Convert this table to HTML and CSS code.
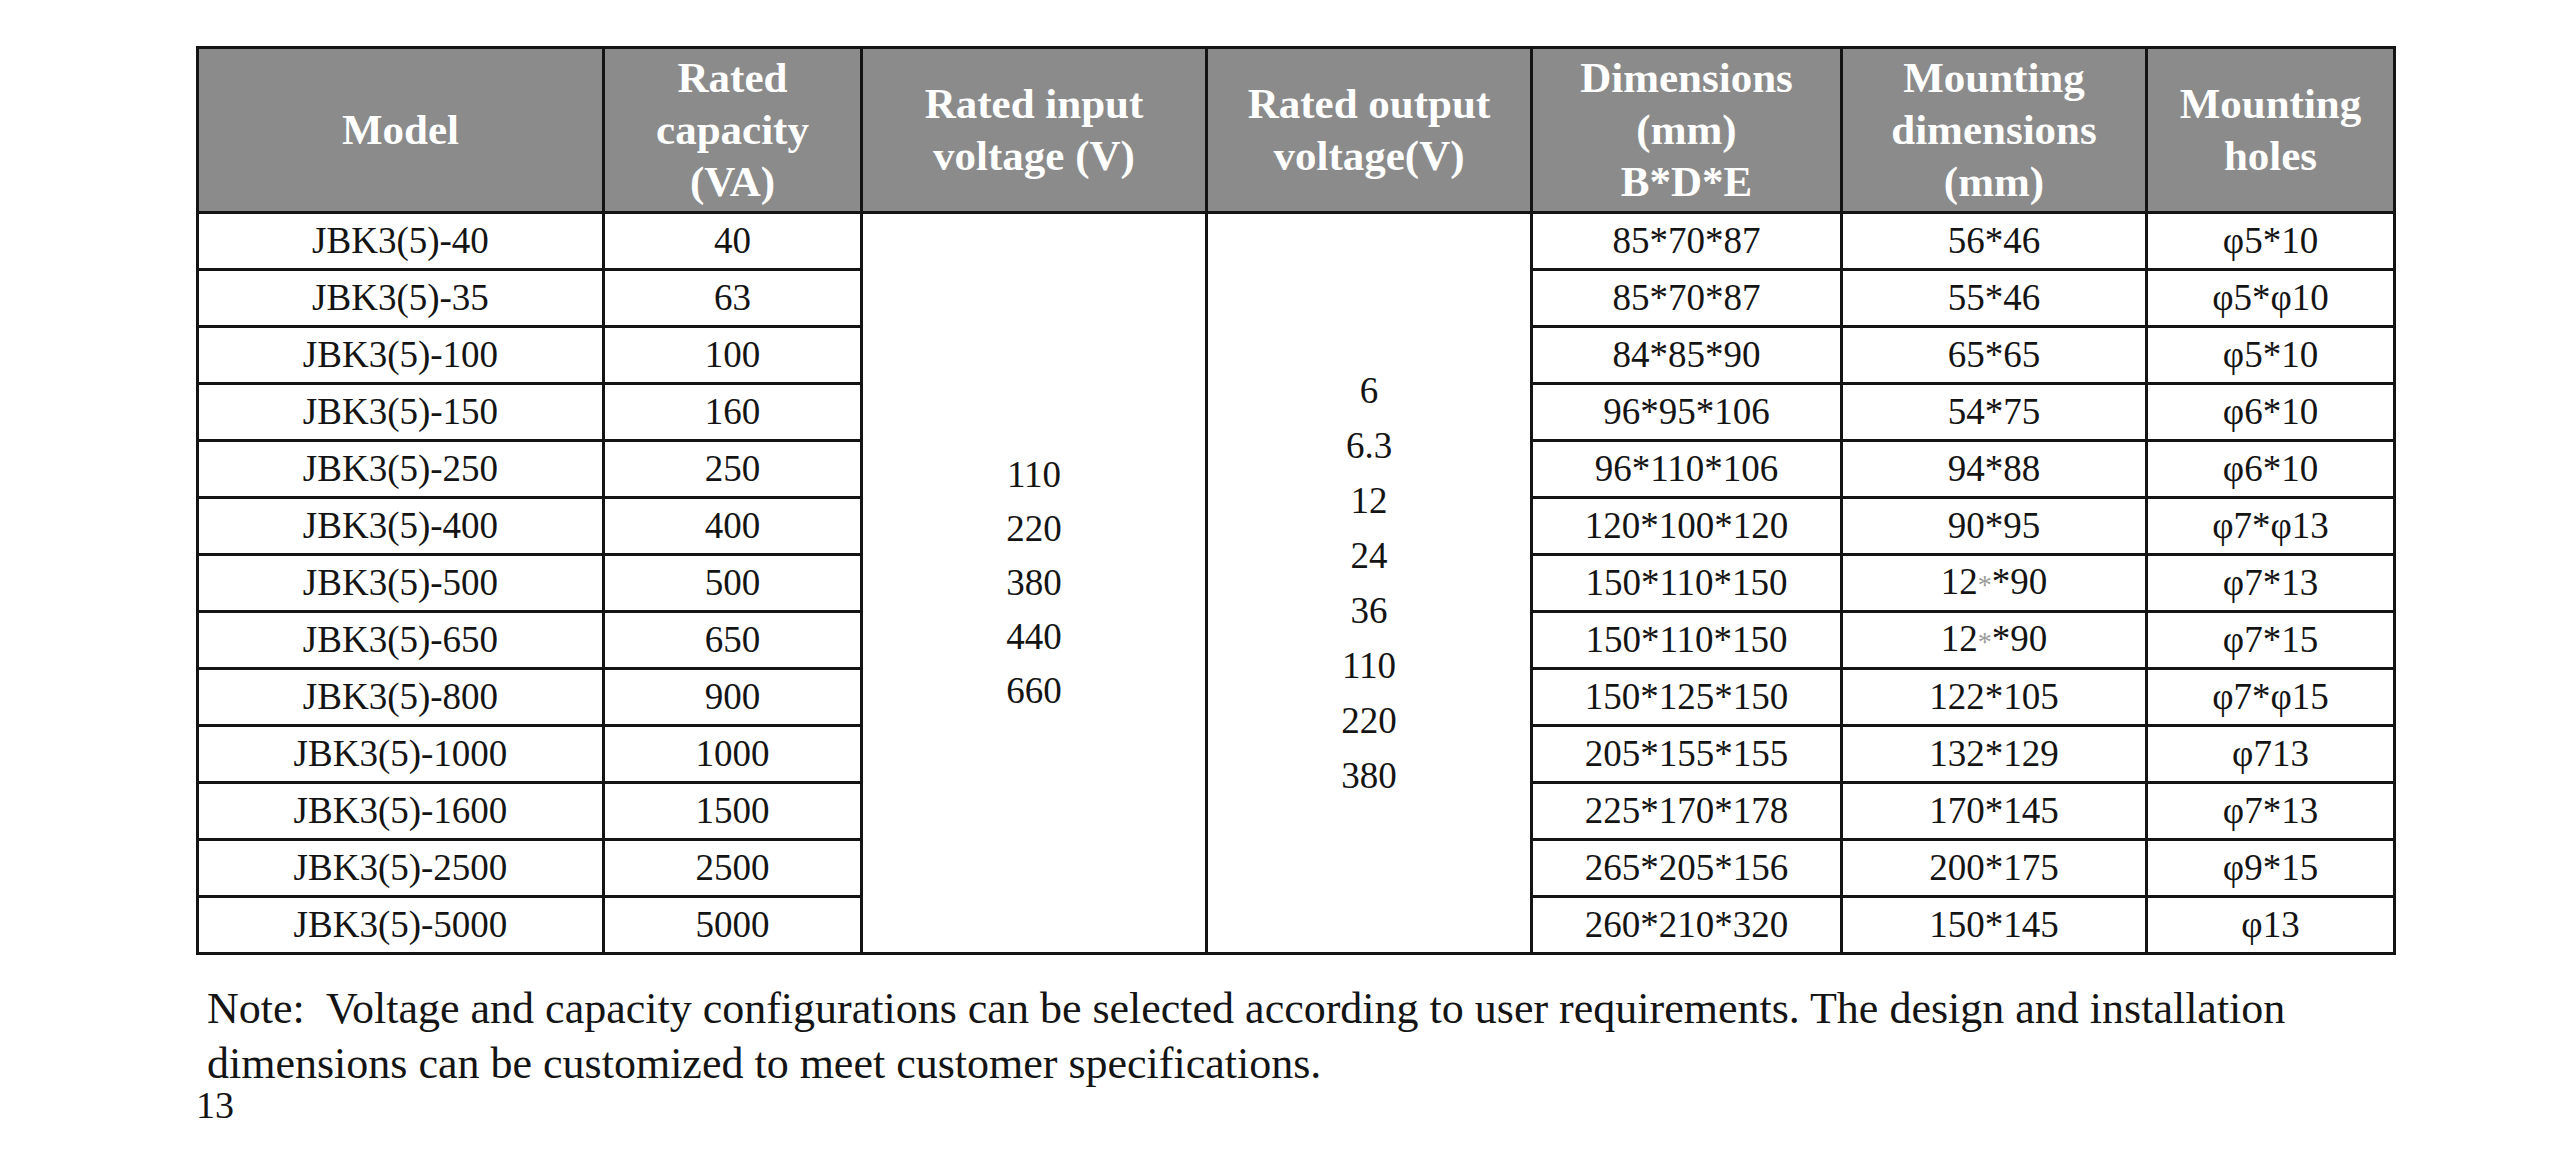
FILE: index.html
```html
<!DOCTYPE html>
<html lang="en">
<head>
<meta charset="utf-8">
<title>JBK3(5) specifications</title>
<link rel="stylesheet" href="styles.css">
</head>
<body>
<div class="page">
  <table class="spec">
    <colgroup>
      <col class="c1"><col class="c2"><col class="c3"><col class="c4"><col class="c5"><col class="c6"><col class="c7">
    </colgroup>
    <thead>
      <tr>
        <th>Model</th>
        <th>Rated<br>capacity<br>(VA)</th>
        <th>Rated input<br>voltage (V)</th>
        <th>Rated output<br>voltage(V)</th>
        <th>Dimensions<br>(mm)<br>B*D*E</th>
        <th>Mounting<br>dimensions<br>(mm)</th>
        <th>Mounting<br>holes</th>
      </tr>
    </thead>
    <tbody>
      <tr>
        <td>JBK3(5)-40</td><td>40</td>
        <td rowspan="13" class="merged in"><div>110</div><div>220</div><div>380</div><div>440</div><div>660</div></td>
        <td rowspan="13" class="merged out"><div>6</div><div>6.3</div><div>12</div><div>24</div><div>36</div><div>110</div><div>220</div><div>380</div></td>
        <td>85*70*87</td><td>56*46</td><td>φ5*10</td>
      </tr>
      <tr><td>JBK3(5)-35</td><td>63</td><td>85*70*87</td><td>55*46</td><td>φ5*φ10</td></tr>
      <tr><td>JBK3(5)-100</td><td>100</td><td>84*85*90</td><td>65*65</td><td>φ5*10</td></tr>
      <tr><td>JBK3(5)-150</td><td>160</td><td>96*95*106</td><td>54*75</td><td>φ6*10</td></tr>
      <tr><td>JBK3(5)-250</td><td>250</td><td>96*110*106</td><td>94*88</td><td>φ6*10</td></tr>
      <tr><td>JBK3(5)-400</td><td>400</td><td>120*100*120</td><td>90*95</td><td>φ7*φ13</td></tr>
      <tr><td>JBK3(5)-500</td><td>500</td><td>150*110*150</td><td>12<span class="faint">*</span>*90</td><td>φ7*13</td></tr>
      <tr><td>JBK3(5)-650</td><td>650</td><td>150*110*150</td><td>12<span class="faint">*</span>*90</td><td>φ7*15</td></tr>
      <tr><td>JBK3(5)-800</td><td>900</td><td>150*125*150</td><td>122*105</td><td>φ7*φ15</td></tr>
      <tr><td>JBK3(5)-1000</td><td>1000</td><td>205*155*155</td><td>132*129</td><td>φ713</td></tr>
      <tr><td>JBK3(5)-1600</td><td>1500</td><td>225*170*178</td><td>170*145</td><td>φ7*13</td></tr>
      <tr><td>JBK3(5)-2500</td><td>2500</td><td>265*205*156</td><td>200*175</td><td>φ9*15</td></tr>
      <tr><td>JBK3(5)-5000</td><td>5000</td><td>260*210*320</td><td>150*145</td><td>φ13</td></tr>
    </tbody>
  </table>
  <p class="note">Note:&nbsp; Voltage and capacity configurations can be selected according to user requirements. The design and installation<br>dimensions can be customized to meet customer specifications.</p>
  <div class="pagenum">13</div>
</div>
</body>
</html>
```

FILE: styles.css
```css
html, body {
  margin: 0;
  padding: 0;
  background: #ffffff;
}

body {
  font-family: "Liberation Serif", "Times New Roman", serif;
  color: #141414;
}

.page {
  padding: 46px 0 0 196px;
}

.spec {
  border-collapse: collapse;
  width: 2197px;
  table-layout: fixed;
  border: 3px solid #141414;
}

.c1 { width: 406px; }
.c2 { width: 258px; }
.c3 { width: 345px; }
.c4 { width: 325px; }
.c5 { width: 310px; }
.c6 { width: 305px; }
.c7 { width: 248px; }

.spec th {
  background: #8b8b8b;
  color: #ffffff;
  font-weight: bold;
  font-size: 43px;
  line-height: 52px;
  height: 162px;
  padding: 0;
  border: 3px solid #141414;
  text-align: center;
  vertical-align: middle;
}

.spec td {
  font-size: 37px;
  line-height: 40px;
  height: 54px;
  padding: 0;
  border: 3px solid #141414;
  text-align: center;
  vertical-align: middle;
}

.spec td.merged {
  vertical-align: middle;
}

.spec td.in div {
  line-height: 54px;
}

.spec td.out div {
  line-height: 55px;
}

.faint {
  color: #9a9a9a;
  font-size: 28px;
}

.note {
  margin: 26px 0 0 11px;
  font-size: 44px;
  line-height: 55px;
  color: #141414;
}

.pagenum {
  margin-top: -6px;
  font-size: 38px;
  line-height: 40px;
  color: #141414;
}
```
